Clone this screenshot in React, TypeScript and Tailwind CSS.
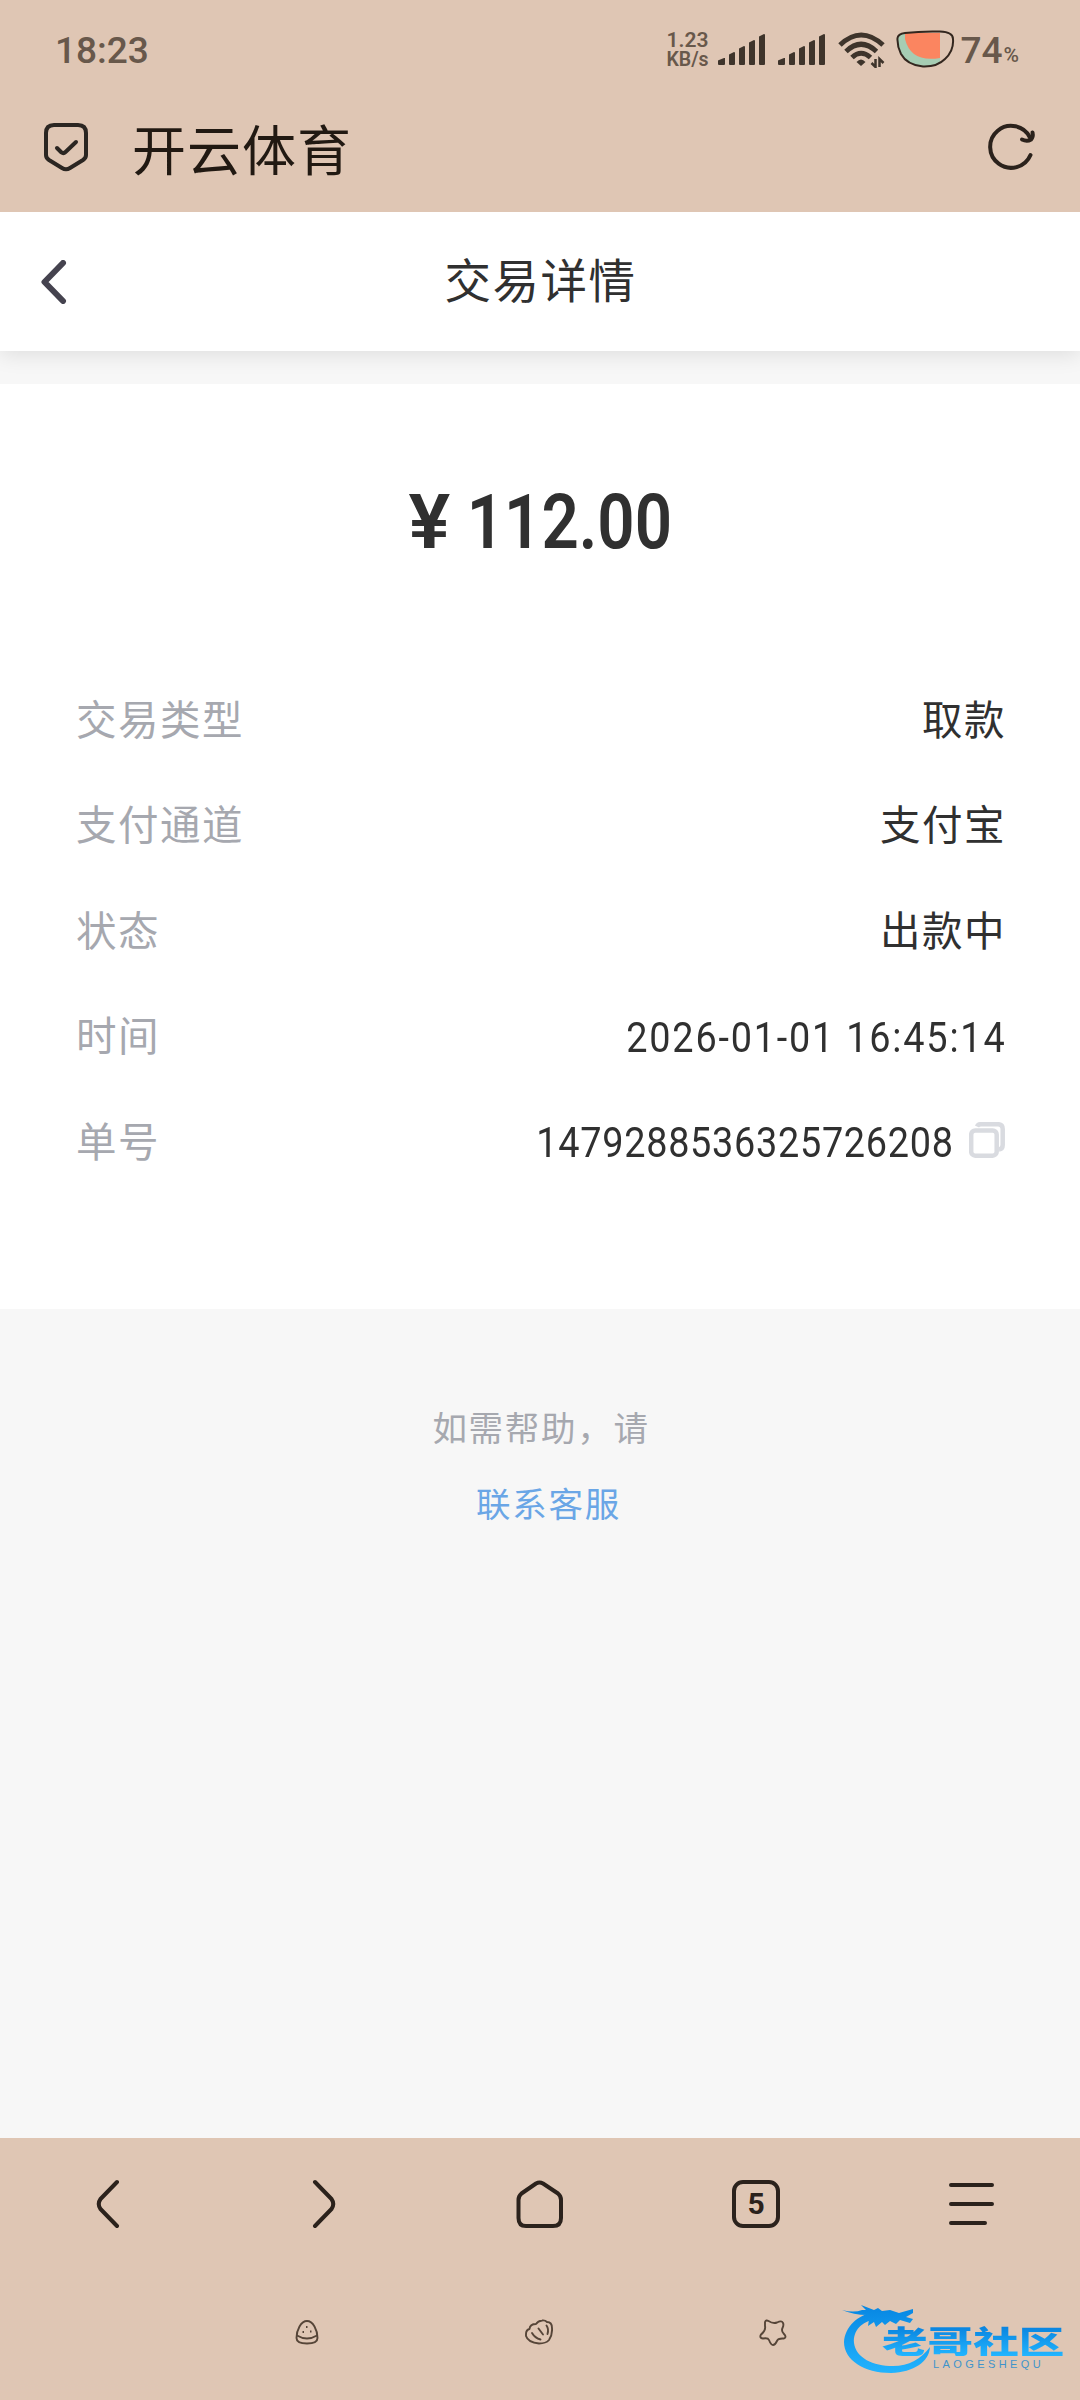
import { twMerge } from 'tailwind-merge'

interface DetailRowProps {
  label: string
  value: string
  valueClassName?: string
  action?: React.ReactNode
}

interface IconProps {
  className?: string
}

const INK = '#2b221c'

function SignalIcon({ className }: IconProps) {
  return (
    <svg className={className} width="48" height="32" viewBox="0 0 48 32" fill="#3e342b">
      <path d="M1 31q-1 0-1-1v-3q0-1 1-1l5-2h1v6q0 1-1 1z" />
      <path d="M12 31q-1 0-1-1V21q0-1 1-1l4-2q1 0 1 1v11q0 1-1 1z" />
      <path d="M22 31q-1 0-1-1V15q0-1 1-1l4-2q1 0 1 1v17q0 1-1 1z" />
      <path d="M32 31q-1 0-1-1V9q0-1 1-1l4-2q1 0 1 1v23q0 1-1 1z" />
      <path d="M42 31q-1 0-1-1V3q0-1 1-1l4-2q1 0 1 1v29q0 1-1 1z" />
    </svg>
  )
}

function WifiIcon() {
  return (
    <svg width="48" height="36" viewBox="0 0 48 36" fill="none" stroke="#3e342b" strokeWidth="5">
      <path d="M2 13Q23-7 45 13" />
      <path d="M8 19.500Q23 5 38.500 19.500" />
      <path d="M14 25.500Q23 17 32.500 25.500" />
      <path d="M18.500 30q4.500-5 9 0l-4.500 4z" fill="#3e342b" stroke="none" />
      <path d="M37.500 27v8l-4-4M41.500 35v-8l4 4" strokeWidth="2.500" />
    </svg>
  )
}

function BatteryIcon() {
  return (
    <svg width="60" height="40" viewBox="0 0 60 40" fill="none">
      <path d="M4 6Q6 4 12 4H45V35Q36 38 27 37Q14 36 7 27Q2 19 3 9z" fill="#a6cdb3" />
      <path d="M10 4H45V29Q16 34 10 10z" fill="#fb8560" />
      <path
        d="M10 4Q26 2 45 2.500Q58 3 58 10Q59 22 50 30Q42 38 28 37.500Q12 36 6 25Q2 17 2.500 9Q3 5 10 4z"
        stroke="#33271f"
        strokeWidth="2"
      />
    </svg>
  )
}

function ShieldIcon() {
  return (
    <svg width="48" height="52" viewBox="0 0 48 52" fill="none" stroke="#2b2622" strokeLinecap="round" strokeLinejoin="round">
      <path d="M12 4H36Q44 4 44 12V34Q44 37 41 39L28 47Q24 49.500 20 47L7 39Q4 37 4 34V12Q4 4 12 4z" strokeWidth="4" />
      <path d="M15 27L19.500 31.500Q21.500 33 23.500 31L34 21" strokeWidth="4" />
    </svg>
  )
}

function RefreshIcon() {
  return (
    <svg width="50" height="50" viewBox="0 0 50 50" fill="none" stroke={INK} strokeWidth="4" strokeLinecap="round" strokeLinejoin="round">
      <path d="M43.500 33A21 21 0 1 1 43 15.500" />
      <path d="M35 17.500Q40 20 44 17.500Q46.500 15 45.500 10.500" />
    </svg>
  )
}

function BackIcon() {
  return (
    <svg className="ml-px" width="26" height="44" viewBox="0 0 26 44" fill="none" stroke="#45434f" strokeWidth="6" strokeLinecap="round" strokeLinejoin="round">
      <path d="M22 3L3.500 22L22 41" />
    </svg>
  )
}

function CopyIcon() {
  return (
    <svg width="36" height="36" viewBox="0 0 36 36" fill="none" stroke="#d9dbe0" strokeWidth="4.500">
      <rect x="2.200" y="8.500" width="25.500" height="25.200" rx="4" />
      <path d="M8 4.500Q9 2.200 12 2.200H29Q33.700 2.200 33.700 7V23Q33.700 27 30 27.500" />
    </svg>
  )
}

function NavChevron({ className }: IconProps) {
  return (
    <svg className={className} width="24" height="50" viewBox="0 0 24 50" fill="none" stroke={INK} strokeWidth="4" strokeLinecap="round" strokeLinejoin="round">
      <path d="M21 3L4.500 20Q1 25 4.500 30L21 47" />
    </svg>
  )
}

function HomeIcon() {
  return (
    <svg width="50" height="50" viewBox="0 0 50 50" fill="none" stroke={INK} strokeWidth="4" strokeLinejoin="round">
      <path d="M21 4.500Q24.500 2.500 28 4.500L43 14.500Q46 17 46 21V39Q46 47 38 47H11Q3.500 47 3.500 39V21Q3.500 17 6.500 14.500z" />
    </svg>
  )
}

function MenuIcon() {
  return (
    <svg width="46" height="44" viewBox="0 0 46 44" fill="none" stroke={INK} strokeWidth="4" strokeLinecap="round">
      <path d="M2 3H43M2 22H43M2 41H36" />
    </svg>
  )
}

function EggIcon() {
  return (
    <svg width="24" height="25" viewBox="0 0 24 25" fill="none" stroke="#564538" strokeWidth="1.900">
      <path d="M12 1C6 1 1.500 10 1.500 18Q1.500 23.500 12 23.500T22.500 18C22.500 10 18 1 12 1z" />
      <path d="M2 15.500Q12 21.500 22 15.500" />
      <path d="M11 7h1.500M7.500 12H9M15 11.500h1.500" strokeWidth="2" />
    </svg>
  )
}

function ShellIcon() {
  return (
    <svg width="28" height="26" viewBox="0 0 28 26" fill="none" stroke="#564538" strokeWidth="1.900" strokeLinecap="round" strokeLinejoin="round">
      <path d="M1 15Q1 11 4.500 10Q5 5 11 5Q13 2 17 1.500Q20 1 22 3Q27 3 27 9Q27.500 16 24 21Q21 24.500 14 24.500Q3 23.500 1 17z" />
      <path d="M7 14Q10 19 15.500 20.500M13.500 9.500L18 15.500M21.500 6.500Q24 10 22.500 15" />
    </svg>
  )
}

function StarIcon() {
  return (
    <svg width="28" height="28" viewBox="0 0 28 28" fill="none" stroke="#564538" strokeWidth="1.900" strokeLinejoin="round">
      <path d="M6 4Q7 1.500 9.500 3Q14 6 18 4.500Q23 2 24 5Q25 7 23.500 10Q22 13 25 16Q28 19 25 20.500Q19 20 18 23Q16 27 14 27T10 22Q9 19.500 4 20.500Q0 20 2 16.500Q7 12.500 6 8z" />
    </svg>
  )
}

function DragonMark() {
  return (
    <svg width="90" height="70" viewBox="0 0 90 70">
      <defs>
        <linearGradient id="dragon" x1="0" y1="0" x2="0" y2="70" gradientUnits="userSpaceOnUse">
          <stop offset="0" stopColor="#0786e2" />
          <stop offset="1" stopColor="#22b5ff" />
        </linearGradient>
      </defs>
      <g fill="url(#dragon)">
        <path d="M33 7C15 10 3 22 2 37C2 55 22 68 49 68C72 67 87 57 88 42C79 54 67 61 51 61C31 61 14 53 12 38C11 25 20 17 33 14z" />
        <path d="M0 5Q12 8 20 5L24 5L19 0L32 5L36 3L40 6L48 5L57 8L64 6L71 4L71 8L64 12L71 14L68 18L58 15L54 19L48 16L43 20L40 17L34 22L32 17L26 21L27 14L20 15L25 10Q12 10 0 5z" />
      </g>
    </svg>
  )
}

function StatusBar() {
  return (
    <div className="flex h-[84px] items-center pl-[55px] pr-[61px] pt-[16px] font-['Roboto'] text-[#68584b]">
      <span className="text-[37px] font-medium leading-none">18:23</span>
      <div className="ml-auto flex items-center">
        <div className="mr-[9px] w-[43px] whitespace-nowrap font-semibold leading-[19px]">
          <div className="text-[21px]">1.23</div>
          <div className="text-[19.500px]">KB/s</div>
        </div>
        <SignalIcon className="mr-3" />
        <SignalIcon className="mr-3" />
        <WifiIcon />
        <div className="ml-[9px] mr-[5px] -mt-[2px]">
          <BatteryIcon />
        </div>
        <span className="text-[37px] font-medium leading-none">74</span>
        <span className="ml-px mt-[10px] text-[21px] font-medium leading-none">%</span>
      </div>
    </div>
  )
}

function DetailRow({ label, value, valueClassName, action }: DetailRowProps) {
  return (
    <div className="flex h-[105.600px] items-center justify-between">
      <span className="-mt-[2px] text-[40.500px] leading-none tracking-[1.500px] text-[#a6a8af]">{label}</span>
      <span className="flex items-center text-[#303030]">
        <span className={twMerge('-mt-[2px] -mr-[2px] text-[40.500px] leading-none tracking-[1.500px]', valueClassName)}>
          {value}
        </span>
        {action}
      </span>
    </div>
  )
}

export default function App() {
  return (
    <div className="flex h-[2400px] w-[1080px] flex-col overflow-hidden bg-[#f7f7f7] font-['Noto_Sans_CJK_SC',sans-serif]">
      <div className="relative z-10 h-[212px] shrink-0 bg-[#dfc6b4]">
        <StatusBar />
        <div className="flex h-[128px] items-center pl-[42px] pr-[43px]">
          <div className="-mt-[3px]">
            <ShieldIcon />
          </div>
          <h1 className="ml-[42px] text-[54px] leading-none tracking-[1px] text-[#211912]">开云体育</h1>
          <div className="-mt-[3px] ml-auto">
            <RefreshIcon />
          </div>
        </div>
      </div>

      <header className="grid h-[139px] shrink-0 grid-cols-[1fr_auto_1fr] items-center bg-white px-10 shadow-[0_4px_20px_rgba(0,0,0,0.1)]">
        <BackIcon />
        <h2 className="-mt-[7px] pl-px text-[46.500px] leading-none tracking-[1.500px] text-[#303030]">交易详情</h2>
      </header>

      <main className="mt-[33px] h-[925px] shrink-0 bg-white px-[76px]">
        <div className="-mt-[5px] flex h-[287px] items-center justify-center pb-px font-['Roboto'] text-[76px] font-semibold leading-none text-[#303030]">
          <span className="mr-[14px] scale-x-[1.030]">¥</span>
          <span className="-ml-[14px] -mr-[18px] scale-x-[0.860]">112.00</span>
        </div>
        <DetailRow label="交易类型" value="取款" />
        <DetailRow label="支付通道" value="支付宝" />
        <DetailRow label="状态" value="出款中" />
        <DetailRow
          label="时间"
          value="2026-01-01 16:45:14"
          valueClassName="mt-[3px] origin-right scale-x-[0.900] font-['Roboto'] text-[42px] tracking-[2px]"
        />
        <DetailRow
          label="单号"
          value="1479288536325726208"
          valueClassName="mt-[3px] mr-0 origin-right scale-x-[0.900] font-['Roboto'] text-[42px] tracking-[0.800px]"
          action={
            <span className="-mr-[1px] -mt-[2px] ml-[15px]">
              <CopyIcon />
            </span>
          }
        />
      </main>

      <div className="flex flex-1 flex-col items-center pt-[98px] text-[34.500px] leading-[38px] tracking-[1.700px]">
        <p className="pl-[2px] text-[#a6a8af]">如需帮助，请</p>
        <a className="ml-[17px] mt-[38px] text-[#6aa6e6]">联系客服</a>
      </div>

      <footer className="h-[262px] shrink-0 bg-[#dfc6b4]">
        <nav className="grid h-[132px] grid-cols-5 place-items-center">
          <NavChevron />
          <NavChevron className="rotate-180" />
          <HomeIcon />
          <div className="flex size-[48px] items-center justify-center rounded-[11px] border-4 border-[#2b221c] font-['Roboto'] text-[30px] font-bold leading-none text-[#2b221c]">
            5
          </div>
          <MenuIcon />
        </nav>
        <div className="relative flex h-[124px] items-center justify-center gap-[206px] pl-[2px]">
          <EggIcon />
          <ShellIcon />
          <StarIcon />
          <div className="absolute left-[842px] top-[35px]">
            <DragonMark />
            <div className="absolute left-[40px] top-[19px] origin-left scale-x-[1.470] whitespace-nowrap bg-linear-to-b from-[#087fdc] to-[#22b5ff] bg-clip-text text-[31px] font-black leading-[32px] text-transparent">
              老哥社区
            </div>
            <div className="absolute left-[91px] top-[53px] whitespace-nowrap font-['Liberation_Sans'] text-[11px] leading-[12px] tracking-[3.400px] text-[#3f94cb]">
              LAOGESHEQU
            </div>
          </div>
        </div>
      </footer>
    </div>
  )
}
